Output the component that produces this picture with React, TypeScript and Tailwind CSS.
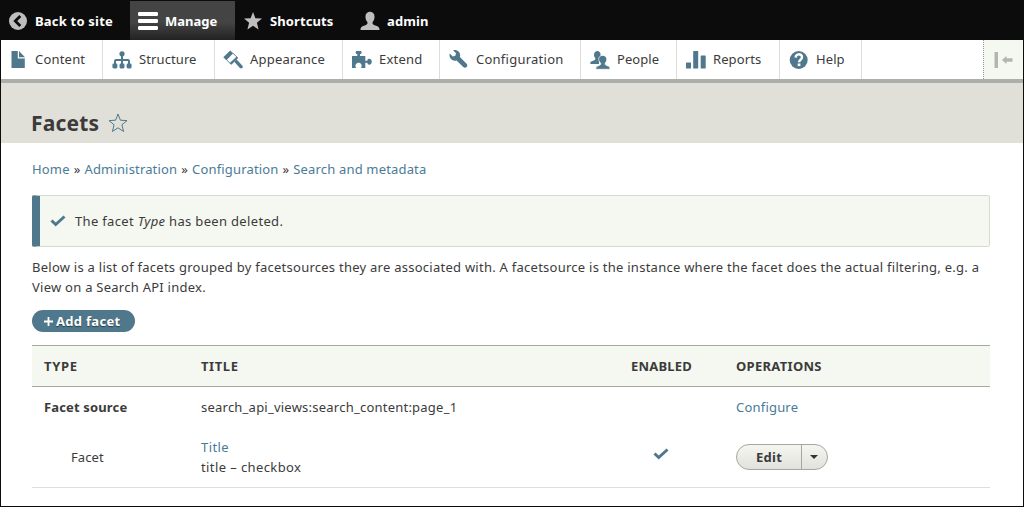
import type { ReactNode } from "react";

function Icon({ children, className = "" }: { children: ReactNode; className?: string }) {
  return (
    <svg viewBox="0 0 20 20" className={`h-5 w-5 shrink-0 ${className}`} fill="currentColor" aria-hidden="true">
      {children}
    </svg>
  );
}

const starPath = "M10 1l2.400 6.200 6.600.4-5.100 4.200 1.700 6.700L10 14.800l-5.600 3.700 1.700-6.700L1 7.600l6.600-.4z";

const icons = {
  file: (
    <Icon>
      <path d="M3.500 1h6.300v7.500h7V18H3.500zM11 1l6 6.300H11z" />
    </Icon>
  ),
  structure: (
    <Icon>
      <circle cx="10" cy="3.800" r="2.600" />
      <path d="M9 5h2v4h5a2 2 0 0 1 2 2v3h-2v-3h-5v3H9v-3H4v3H2v-3a2 2 0 0 1 2-2h5z" />
      <rect x="0.400" y="13.500" width="5" height="5" rx="1.400" />
      <rect x="7.500" y="13.500" width="5" height="5" rx="1.400" />
      <rect x="14.600" y="13.500" width="5" height="5" rx="1.400" />
    </Icon>
  ),
  appearance: (
    <Icon>
      <path d="M7.200.4l3 2.900-6.800 7L.3 7.200z" />
      <path d="M10 3.300l4.300 4.200M3.500 9.800l4.300 4.200" fill="none" stroke="currentColor" strokeWidth="0.900" />
      <path d="M13.800 6.500l1.400 1.600-6.800 6.600-1.700-1.600z" />
      <path d="M11.300 11.700l2.400-2.200 5.700 6.200c1.200 1.800-.8 3.500-2.500 2.300z" />
    </Icon>
  ),
  extend: (
    <Icon>
      <path d="M0 6h5.300V4.300C3 3.800 3.200 1 5 1h3.300c1.800 0 2 2.800-.3 3.300V6h5.300v4.700h2c.3-3 4.500-2.400 4.500 1s-4.200 4-4.500 1h-2V18H9c2-3-.5-5.200-2.400-5.200S2.200 15 4.200 18H0z" />
    </Icon>
  ),
  wrench: (
    <svg viewBox="0 0 16 16" className="h-[19px] w-5 shrink-0" fill="currentColor" aria-hidden="true">
      <path d="M14.416 11.586L8.750 5.921c.15-.449.252-.921.252-1.421 0-2.485-2.016-4.500-4.502-4.500-.505 0-.981.102-1.434.255l2.431 2.431-.588 2.196-2.196.588L.268 3.025C.106 3.489 0 3.981 0 4.500 0 6.986 2.014 9 4.500 9c.5 0 .972-.102 1.421-.251l5.667 5.665c.781.781 2.047.781 2.828 0s.781-2.047 0-2.828z" />
    </svg>
  ),
  people: (
    <Icon>
      <path d="M4 5c0-5.200 6.800-5.200 6.600 0 0 2-.8 2.700-1.500 3.600L9 14H.8c-.8 0-.8-2 .4-2.500l3.100-1.300c1.400-.8 1.200-1.700.6-2.600C4.300 7 4 6.200 4 5z" />
      <path
        stroke="white"
        strokeWidth="0.700"
        d="M8.700 9.500c-.5-5.500 8.300-5.500 8 0 0 1.800-.9 2.600-1.400 3.500-.6 1-.2 1.800.9 2.300l2.500 1c1.200.6 1.300 1.700 1.100 3H6c-.2-1.300-.1-2.400 1.100-3l2.500-1c1.200-.6 1.500-1.400.9-2.300-.6-.9-1.800-1.800-1.800-3.500z"
      />
    </Icon>
  ),
  reports: (
    <Icon>
      <rect x="0" y="12.500" width="5" height="6" rx="0.500" />
      <rect x="7.200" y="1" width="5" height="17.500" rx="0.500" />
      <rect x="14.700" y="5.500" width="5" height="13" rx="0.500" />
    </Icon>
  ),
  help: (
    <Icon>
      <circle cx="9.700" cy="10" r="9" />
      <path d="M6.600 7.600C6.800 3.300 13 3.300 13 7.200c0 2.400-2.800 2.600-2.900 5" fill="none" stroke="white" strokeWidth="2.400" />
      <rect x="8.700" y="13.500" width="2.700" height="2.600" fill="white" />
    </Icon>
  ),
};

const tabs = [
  { label: "Content", icon: icons.file, box: "w-[102px] pl-[7px]", track: "tracking-[0.2px]" },
  { label: "Structure", icon: icons.structure, box: "w-[112px] pl-[9px]", track: "tracking-[0.1px]" },
  { label: "Appearance", icon: icons.appearance, box: "w-[128px] pl-[8px]", track: "tracking-[0.2px]" },
  { label: "Extend", icon: icons.extend, box: "w-[97px] pl-[9px]", track: "tracking-[0.2px]" },
  { label: "Configuration", icon: icons.wrench, box: "w-[141px] pl-[9px]", track: "tracking-[0.25px]" },
  { label: "People", icon: icons.people, box: "w-[96px] pl-[9px]", track: "tracking-[0.05px]" },
  { label: "Reports", icon: icons.reports, box: "w-[103px] pl-[9px]", track: "tracking-[0.1px]" },
  { label: "Help", icon: icons.help, box: "w-[82px] pl-[9px]", track: "tracking-[0.1px]" },
];

function Check() {
  return (
    <svg viewBox="0 0 16 12" className="h-3 w-4 shrink-0" aria-hidden="true">
      <path d="M1.500 5.500l4.200 4L14.500 1.500" fill="none" stroke="#50788c" strokeWidth="3" />
    </svg>
  );
}

function Toolbar() {
  return (
    <nav className="flex h-10 shrink-0 bg-[#0c0c0c] text-[13px] font-bold text-white">
      <a className="flex w-[129px] items-center gap-[7px] pt-px pl-[7px]">
        <Icon className="text-[#bebebe]">
          <circle cx="10" cy="10" r="9" />
          <path d="M12.300 5L7.300 10l5 5" fill="none" stroke="#0c0c0c" strokeWidth="2.800" />
        </Icon>
        <span className="tracking-[0.2px]">Back to site</span>
      </a>
      <a className="mt-px flex w-[105px] items-center gap-[7px] bg-linear-to-b from-[#444] from-55% to-[#222] pl-2">
        <Icon>
          <rect y="1" width="20" height="4" rx="1.200" />
          <rect y="8" width="20" height="4" rx="1.200" />
          <rect y="15" width="20" height="4" rx="1.200" />
        </Icon>
        Manage
      </a>
      <a className="flex w-[117px] items-center gap-[7px] pt-px pl-2">
        <Icon className="text-[#bebebe]">
          <path d={starPath} />
        </Icon>
        <span className="tracking-[0.1px]">Shortcuts</span>
      </a>
      <a className="flex items-center gap-[7px] pt-px pl-2">
        <Icon className="text-[#bebebe]">
          <path d="M5.500 6c-.7-7 9.700-7 9 0 0 2.500-1 3.700-1.700 4.800-.7 1.500-.2 2.500 1.200 3.100l3.500 1.400c1.500.7 2 2 2 3.700h-19c0-1.700.5-3 2-3.700L6 13.900c1.400-.6 1.900-1.600 1.200-3.100C6.500 9.700 5.500 8.500 5.500 6z" />
        </Icon>
        <span className="tracking-[0.1px]">admin</span>
      </a>
    </nav>
  );
}

function Tray() {
  return (
    <nav className="flex h-[43px] shrink-0 border-b-4 border-[#abaea9] bg-white text-[13px]">
      {tabs.map((t) => (
        <a key={t.label} className={`flex shrink-0 items-center gap-[7px] border-r border-[#ddddd5] text-[#50788c] ${t.box}`}>
          {t.icon}
          <span className={`pb-0.5 text-[#3b3b3b] ${t.track}`}>{t.label}</span>
        </a>
      ))}
      <button className="ml-auto flex w-10 items-center justify-center border-l border-dotted border-[#999] bg-[#f5f8f0]">
        <svg viewBox="0 0 20 16" className="h-4 w-5 text-[#b3b5b0]" fill="currentColor" aria-hidden="true">
          <rect x="0.500" y="0" width="3.500" height="16" />
          <path d="M8 8l4.500-4v2.200h6v3.600h-6V12z" />
        </svg>
      </button>
    </nav>
  );
}

const cols = "grid grid-cols-[157px_430px_105px_1fr] pl-3";

function FacetTable() {
  return (
    <section className="mt-[13px] border-b border-[#dededa]">
      <div className={`${cols} h-[42px] items-center border-y border-[#a6a8a2] bg-[#f5f8f0] font-bold`}>
        <span className="tracking-[0.7px]">TYPE</span>
        <span className="tracking-[0.6px]">TITLE</span>
        <span className="tracking-[0.2px]">ENABLED</span>
        <span className="tracking-[0.3px]">OPERATIONS</span>
      </div>
      <div className={`${cols} h-10 items-center`}>
        <b className="tracking-[0.15px]">Facet source</b>
        <span className="tracking-[0.23px]">search_api_views:search_content:page_1</span>
        <span />
        <a className="tracking-[0.2px] text-[#4a7b96]">Configure</a>
      </div>
      <div className={`${cols} h-[60px] items-center`}>
        <span className="pl-[27px] tracking-[0.1px]">Facet</span>
        <div className="leading-5 tracking-[0.4px]">
          <a className="block text-[#4a7b96]">Title</a>
          <div>title – checkbox</div>
        </div>
        <span className="-mt-1.5 pl-[22px]">
          <Check />
        </span>
        <div className="flex h-[26px] w-[92px] rounded-full border border-[#a6a6a2] bg-linear-to-b from-[#f6f6f1] to-[#e2e2dc] font-bold">
          <button className="w-[65px] border-r border-[#a6a6a2] tracking-[0.3px]">Edit</button>
          <button className="flex flex-1 items-center justify-center pr-0.5" aria-label="More operations">
            <svg viewBox="0 0 8 4" className="h-1 w-2" aria-hidden="true">
              <path d="M0 0h8L4 4z" fill="#333" />
            </svg>
          </button>
        </div>
      </div>
    </section>
  );
}

export default function App() {
  return (
    <div className="flex h-[507px] w-[1024px] flex-col overflow-hidden border border-t-0 border-[#0c0c0c] bg-white font-['Noto_Sans',sans-serif] text-[13px] leading-5 text-[#3b3b3b]">
      <Toolbar />
      <Tray />
      <header className="flex h-[60px] shrink-0 items-center gap-[9px] bg-[#e0e0d8] pt-[19px] pl-[30px]">
        <h1 className="text-[21px] font-bold tracking-[0.2px]">Facets</h1>
        <Icon className="text-[#50788c]">
          <path d={starPath} fill="none" stroke="currentColor" strokeWidth="1" />
        </Icon>
      </header>
      <main className="pr-[33px] pl-[31px]">
        <div className="mt-4 flex gap-1 tracking-[0.165px]">
          <a className="text-[#4a7b96]">Home</a>»<a className="text-[#4a7b96]">Administration</a>»
          <a className="text-[#4a7b96]">Configuration</a>»<a className="text-[#4a7b96]">Search and metadata</a>
        </div>
        <div className="mt-4 flex h-[52px] items-center gap-[9px] rounded-[2px] border border-l-8 border-[#d9dacf] border-l-[#50788c] bg-[#f5f8f0] pl-2.5">
          <Check />
          <span className="tracking-[0.33px]">
            The facet <em>Type</em> has been deleted.
          </span>
        </div>
        <p className="mt-2.5 whitespace-nowrap tracking-[0.255px]">
          Below is a list of facets grouped by facetsources they are associated with. A facetsource is the instance where the facet does the actual filtering, e.g. a
          <br />
          View on a Search API index.
        </p>
        <button className="mt-[13px] flex h-[22px] w-[103px] items-center gap-[3px] rounded-full bg-[#50788c] pl-3 font-bold text-white [text-shadow:0_1px_1px_rgba(0,0,0,0.5)]">
          <svg viewBox="0 0 10 10" className="h-[9px] w-[9px]" aria-hidden="true">
            <path d="M5 0v10M0 5h10" stroke="white" strokeWidth="2" />
          </svg>
          <span className="tracking-[0.3px]">Add facet</span>
        </button>
        <FacetTable />
      </main>
    </div>
  );
}
